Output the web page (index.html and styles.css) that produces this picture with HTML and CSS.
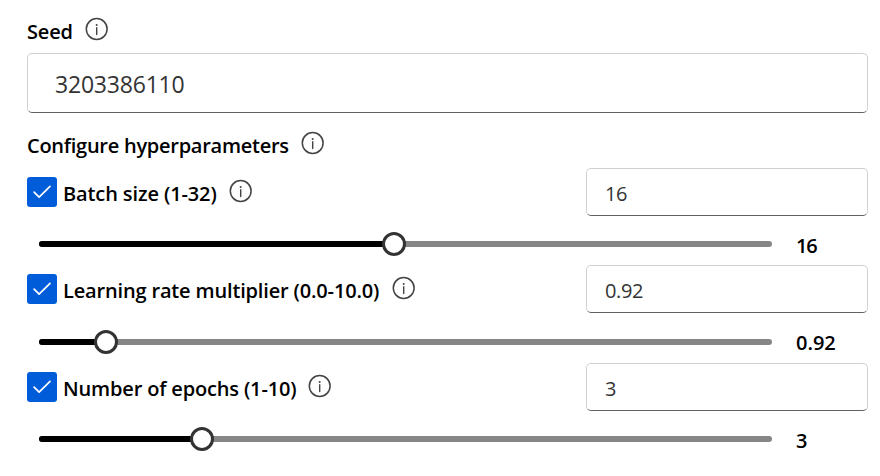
FILE: index.html
```html
<!DOCTYPE html>
<html lang="en">
<head>
<meta charset="utf-8">
<title>Hyperparameters</title>
<link rel="stylesheet" href="styles.css">
</head>
<body>
<svg width="0" height="0" class="defs">
<symbol id="info" viewBox="0 0 24 24"><circle cx="11.7" cy="12" r="10.4" fill="none" stroke="#444" stroke-width="1.5"/><circle cx="11.7" cy="7.9" r="1" fill="#444"/><path d="M11.7 10.7v6.8" stroke="#444" stroke-width="1.4" stroke-linecap="round"/></symbol>
<symbol id="check" viewBox="0 0 30 30"><path d="M7.1 15.2l5 5L23 9.4" fill="none" stroke="#fff" stroke-width="1.7" stroke-linecap="round" stroke-linejoin="round"/></symbol>
</svg>
<main class="form">
<div class="heading seed"><span class="text seed-text">Seed</span><svg class="info"><use href="#info"/></svg></div>
<div class="input large"><span class="seed-value">3203386110</span></div>
<div class="heading config"><span class="text config-text">Configure hyperparameters</span><svg class="info"><use href="#info"/></svg></div>
<section class="param">
<div class="row"><span class="box"><svg><use href="#check"/></svg></span><span class="text batch">Batch size (1-32)</span><svg class="info"><use href="#info"/></svg><div class="input"><span>16</span></div></div>
<div class="slider"><div class="track"><div class="fill" style="width:355px"></div><div class="thumb"></div></div><span class="value">16</span></div>
</section>
<section class="param middle">
<div class="row"><span class="box"><svg><use href="#check"/></svg></span><span class="text rate">Learning rate multiplier (0.0-10.0)</span><svg class="info"><use href="#info"/></svg><div class="input"><span>0.92</span></div></div>
<div class="slider"><div class="track"><div class="fill" style="width:67px"></div><div class="thumb"></div></div><span class="value">0.92</span></div>
</section>
<section class="param">
<div class="row"><span class="box"><svg><use href="#check"/></svg></span><span class="text epochs">Number of epochs (1-10)</span><svg class="info"><use href="#info"/></svg><div class="input"><span>3</span></div></div>
<div class="slider"><div class="track"><div class="fill" style="width:163px"></div><div class="thumb"></div></div><span class="value">3</span></div>
</section>
</main>
</body>
</html>
```
FILE: styles.css
```css
* { box-sizing: border-box; }
body { margin: 0; background: #fff; color: #000; font: 600 20px/28px "Segoe UI", "Open Sans", "Noto Sans", sans-serif; }
.defs { display: block; }
.form { width: 841px; margin-left: 27px; padding-top: 17px; }
.heading, .row, .slider { display: flex; align-items: center; }
.text { white-space: nowrap; letter-spacing: -.16px; padding-top: 2px; }
.row .text { padding-top: 4px; }
.info { width: 24px; height: 24px; margin-left: 12px; flex: none; position: relative; top: -2px; }
.seed { height: 28px; }
.seed-text { width: 46px; }
.config { height: 28px; margin-top: 18px; }
.config-text { width: 262px; letter-spacing: -.26px; }
.input { width: 282px; height: 48px; margin-left: auto; padding: 4px 0 0 18px; display: flex; align-items: center; border: 1px solid #d1d1d1; border-bottom-color: #616161; border-radius: 5px; color: #333; font-weight: 400; letter-spacing: -.4px; }
.large { width: 841px; height: 60px; margin-top: 8px; padding: 2px 0 0 27px; font-size: 23px; letter-spacing: -.2px; }
.param { height: 97px; }
.middle { height: 98px; }
.config + .param { margin-top: 9px; }
.row { height: 48px; }
.box { width: 30px; height: 30px; margin-right: 6px; border-radius: 3px; background: #015cda; }
.box svg { display: block; width: 30px; height: 30px; }
.batch { width: 154px; letter-spacing: -.11px; }
.row .info { top: -1px; }
.rate { width: 317px; }
.epochs { width: 233px; }
.slider { height: 56px; padding-left: 12px; }
.middle .slider { height: 58px; }
.track { display: flex; align-items: center; width: 733px; height: 6px; border-radius: 3px; background: #868686; }
.fill { height: 6px; border-radius: 3px 0 0 3px; background: #000; }
.thumb { width: 24px; height: 24px; margin-left: -12px; border: 3px solid #333; border-radius: 50%; background: #fff; }
.value { margin-left: 24px; padding-top: 4px; letter-spacing: -1.2px; }
.middle .value { padding-top: 2px; letter-spacing: 0; }
```
